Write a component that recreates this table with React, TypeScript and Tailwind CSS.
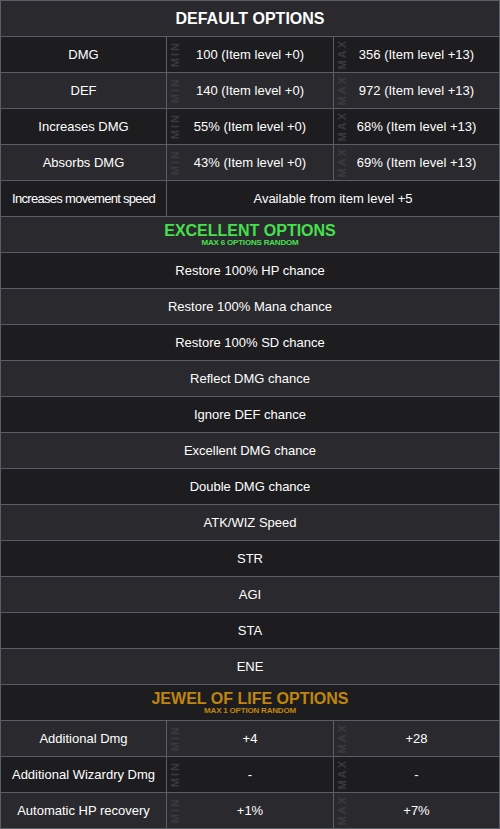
type Fila = { nome: string; min: string; max: string };

const padrao: Fila[] = [
  { nome: 'DMG', min: '100 (Item level +0)', max: '356 (Item level +13)' },
  { nome: 'DEF', min: '140 (Item level +0)', max: '972 (Item level +13)' },
  { nome: 'Increases DMG', min: '55% (Item level +0)', max: '68% (Item level +13)' },
  { nome: 'Absorbs DMG', min: '43% (Item level +0)', max: '69% (Item level +13)' },
];

const excelentes = [
  'Restore 100% HP chance',
  'Restore 100% Mana chance',
  'Restore 100% SD chance',
  'Reflect DMG chance',
  'Ignore DEF chance',
  'Excellent DMG chance',
  'Double DMG chance',
  'ATK/WIZ Speed',
  'STR',
  'AGI',
  'STA',
  'ENE',
];

const joia: Fila[] = [
  { nome: 'Additional Dmg', min: '+4', max: '+28' },
  { nome: 'Additional Wizardry Dmg', min: '-', max: '-' },
  { nome: 'Automatic HP recovery', min: '+1%', max: '+7%' },
];

const escuro = 'bg-[#1d1d1f]';
const claro = 'bg-[#2a2a2e]';

export default function App() {
  // As cores alternam ao longo de toda a tabela, cabeçalhos incluídos.
  let n = 0;
  const fundo = () => (n++ % 2 === 0 ? claro : escuro);

  return (
    <div className="w-[500px] h-[829px] bg-[#1d1d1f] font-['Liberation_Sans',Arial,sans-serif] text-[13px] text-white">
      <div className="border-t border-x border-[#5a5e66]">
        <Cabecalho titulo="DEFAULT OPTIONS" fundo={fundo()} />
        {padrao.map((f) => (
          <LinhaValores key={f.nome} fila={f} fundo={fundo()} />
        ))}
        <div className={`flex h-[36px] border-b border-[#5a5e66] ${fundo()}`}>
          <div className="w-[166px] border-r border-[#5a5e66] flex items-center justify-center tracking-[-0.7px]">
            Increases movement speed
          </div>
          <div className="flex-1 flex items-center justify-center">Available from item level +5</div>
        </div>

        <Cabecalho
          titulo="EXCELLENT OPTIONS"
          sub="MAX 6 OPTIONS RANDOM"
          cor="text-[#45e04c]"
          fundo={fundo()}
        />
        {excelentes.map((t) => (
          <div
            key={t}
            className={`h-[36px] border-b border-[#5a5e66] flex items-center justify-center ${fundo()}`}
          >
            {t}
          </div>
        ))}

        <Cabecalho
          titulo="JEWEL OF LIFE OPTIONS"
          sub="MAX 1 OPTION RANDOM"
          cor="text-[#c0860c]"
          fundo={fundo()}
        />
        {joia.map((f) => (
          <LinhaValores key={f.nome} fila={f} fundo={fundo()} />
        ))}
      </div>
    </div>
  );
}

function Cabecalho({
  titulo,
  sub,
  cor = 'text-white',
  fundo,
}: {
  titulo: string;
  sub?: string;
  cor?: string;
  fundo: string;
}) {
  return (
    <div
      className={`h-[36px] border-b border-[#5a5e66] flex flex-col items-center justify-center ${fundo} ${cor}`}
    >
      <p className="font-bold text-[16px] leading-[15px]">{titulo}</p>
      {sub && <p className="text-[8px] leading-[9px] font-semibold tracking-[-0.2px]">{sub}</p>}
    </div>
  );
}

function LinhaValores({ fila, fundo }: { fila: Fila; fundo: string }) {
  return (
    <div className={`flex h-[36px] border-b border-[#5a5e66] ${fundo}`}>
      <div className="w-[166px] border-r border-[#5a5e66] flex items-center justify-center">
        {fila.nome}
      </div>
      <Celula rotulo="MIN" valor={fila.min} className="w-[167px] border-r border-[#5a5e66]" />
      <Celula rotulo="MAX" valor={fila.max} className="flex-1" />
    </div>
  );
}

function Celula({ rotulo, valor, className }: { rotulo: string; valor: string; className: string }) {
  return (
    <div className={`relative flex items-center justify-center ${className}`}>
      <span className="absolute left-[3px] top-0 bottom-0 flex items-center">
        <span className="[writing-mode:vertical-rl] rotate-180 text-[11px] font-bold leading-[11px] tracking-[2px] text-[#3a3a3d]">
          {rotulo}
        </span>
      </span>
      {valor}
    </div>
  );
}
